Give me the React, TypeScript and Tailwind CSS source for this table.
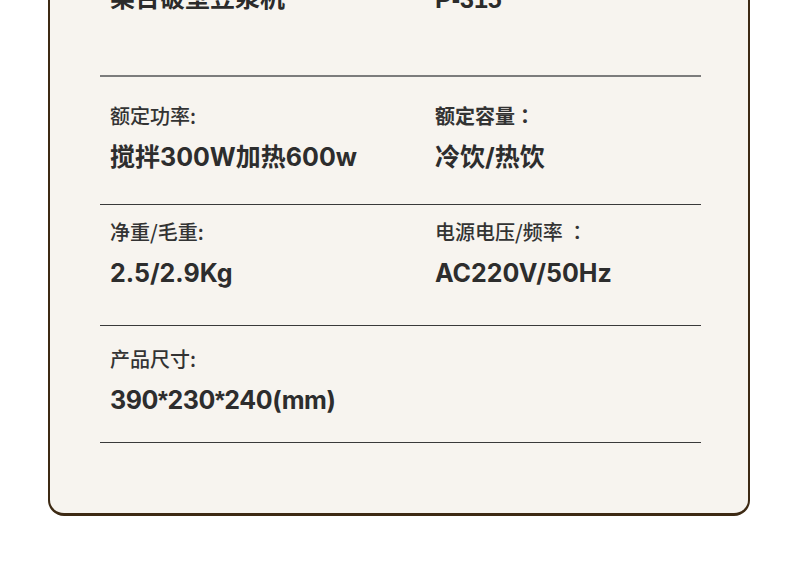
import React from "react";

const latin = "font-['Inter','Noto_Sans_CJK_SC',sans-serif]";

function Label({ children, bold }: { children: React.ReactNode; bold?: boolean }) {
  return (
    <div
      className={`text-[20px] leading-[28px] text-[#333333] font-['Noto_Sans_CJK_SC',sans-serif] ${bold ? "font-bold" : "font-medium"}`}
    >
      {children}
    </div>
  );
}

function Colon() {
  return <span className="font-['Noto_Sans_CJK_TC',sans-serif]">：</span>;
}

function Star() {
  return <span className="font-['Liberation_Sans',sans-serif] font-bold">*</span>;
}

function Value({ children, tight }: { children: React.ReactNode; tight?: boolean }) {
  return (
    <div
      className={`mt-[11px] text-[25px] leading-[32px] font-bold text-[#2d2d2d] ${latin} ${tight ? "tracking-[-0.4px]" : ""}`}
    >
      {children}
    </div>
  );
}

function Row({
  pt,
  pb,
  left,
  right,
}: {
  pt: string;
  pb: string;
  left: React.ReactNode;
  right?: React.ReactNode;
}) {
  return (
    <div className={`grid grid-cols-[325px_1fr] pl-[10px] ${pt} ${pb} border-b border-[#3a3a3a]`}>
      <div>{left}</div>
      <div>{right}</div>
    </div>
  );
}

export default function App() {
  return (
    <div className="w-[790px] h-[568px] bg-white overflow-hidden">
      <div className="ml-[48px] w-[702px] mt-[-57px] bg-[#f7f4ef] border-2 border-t-0 border-[#3d2a14] border-b-[3px] rounded-b-[16px] pb-[70px]">
        <div className="mx-[50px] w-[601px]">
          <div className="grid grid-cols-[325px_1fr] items-start pl-[10px] pt-[36px] pb-[61px] border-b-2 border-[#7c7c7c]">
            <div className="mt-[2px] text-[25px] leading-[30px] font-bold text-[#2b2b2b] font-['Noto_Sans_CJK_SC',sans-serif]">
              某台破壁豆浆机
            </div>
            <div className="mt-[5px] text-[25px] leading-[30px] font-bold text-[#2b2b2b] font-['Liberation_Sans',sans-serif]">
              P-315
            </div>
          </div>
          <Row
            pt="pt-[25px]"
            pb="pb-[31px]"
            left={
              <>
                <Label>额定功率:</Label>
                <Value>搅拌300W加热600w</Value>
              </>
            }
            right={
              <>
                <Label bold>
                  额定容量
                  <Colon />
                </Label>
                <Value>冷饮/热饮</Value>
              </>
            }
          />
          <Row
            pt="pt-[13px]"
            pb="pb-[36px]"
            left={
              <>
                <Label>净重/毛重:</Label>
                <Value>2.5/2.9Kg</Value>
              </>
            }
            right={
              <>
                <Label>
                  电源电压/频率 <Colon />
                </Label>
                <Value>AC220V/50Hz</Value>
              </>
            }
          />
          <Row
            pt="pt-[19px]"
            pb="pb-[26px]"
            left={
              <>
                <Label>产品尺寸:</Label>
                <Value tight>
                  390
                  <Star />
                  230
                  <Star />
                  240(mm)
                </Value>
              </>
            }
          />
        </div>
      </div>
    </div>
  );
}
